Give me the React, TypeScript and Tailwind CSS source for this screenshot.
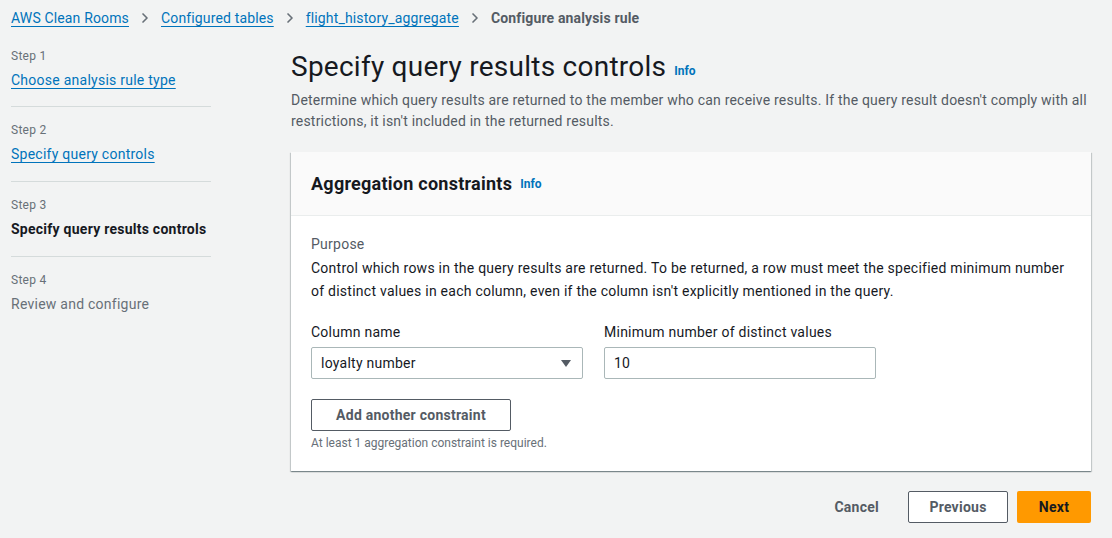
import { ChevronRight } from "lucide-react";

const steps = [
  { label: "Step 1", title: "Choose analysis rule type", state: "link" },
  { label: "Step 2", title: "Specify query controls", state: "link" },
  { label: "Step 3", title: "Specify query results controls", state: "current" },
  { label: "Step 4", title: "Review and configure", state: "disabled" },
];

function Info() {
  return (
    <a className="text-[12px] font-bold text-[#0073bb] leading-none cursor-pointer tracking-normal">
      Info
    </a>
  );
}

export default function App() {
  return (
    <div
      className="min-h-[538px] bg-[#f2f3f3] text-[#16191f] tracking-[0.25px]"
      style={{ fontFamily: '"Roboto", "Liberation Sans", sans-serif' }}
    >
      {/* Breadcrumbs */}
      <nav className="flex items-center gap-[8px] pl-[11px] pt-[2px] h-[34px] text-[14px] tracking-[0.15px]">
        <a className="text-[#0073bb] underline underline-offset-[3px] decoration-1">
          AWS Clean Rooms
        </a>
        <ChevronRight className="w-[16px] h-[16px] text-[#687078]" strokeWidth={2.5} />
        <a className="text-[#0073bb] underline underline-offset-[3px] decoration-1">
          Configured tables
        </a>
        <ChevronRight className="w-[16px] h-[16px] text-[#687078]" strokeWidth={2.5} />
        <a className="text-[#0073bb] underline underline-offset-[3px] decoration-1">
          flight_history_aggregate
        </a>
        <ChevronRight className="w-[16px] h-[16px] text-[#687078]" strokeWidth={2.5} />
        <span className="font-bold text-[#545b64]">Configure analysis rule</span>
      </nav>

      <div className="flex pl-[11px] pt-[10px]">
        {/* Wizard steps */}
        <ol className="w-[200px] shrink-0 mt-[1px]">
          {steps.map((s, i) => (
            <li
              key={s.label}
              className={`${i < steps.length - 1 ? "border-b border-[#d5dbdb]" : ""} ${i > 0 ? "h-[75px] pt-[15px]" : "h-[62px] pt-[3px]"}`}
            >
              <div className="text-[12px] text-[#687078] leading-[16px]">{s.label}</div>
              <div className="mt-[6px] text-[14px] leading-[20px]">
                {s.state === "link" && (
                  <a className="text-[#0073bb] underline underline-offset-[3px] decoration-1">
                    {s.title}
                  </a>
                )}
                {s.state === "current" && <span className="font-bold">{s.title}</span>}
                {s.state === "disabled" && (
                  <span className="text-[#687078]">{s.title}</span>
                )}
              </div>
            </li>
          ))}
        </ol>

        {/* Main content */}
        <main className="ml-[80px] w-[800px]">
          <div className="flex items-end gap-[8px] mt-[5px]">
            <h1 className="text-[28px] leading-[36px] font-normal">
              Specify query results controls
            </h1>
            <div className="pb-[3px]">
              <Info />
            </div>
          </div>
          <p className="mt-[5px] w-[805px] text-[14px] leading-[21px] text-[#545b64] tracking-[0.2px]">
            Determine which query results are returned to the member who can receive results. If the
            query result doesn't comply with all restrictions, it isn't included in the returned
            results.
          </p>

          <section className="mt-[20px] bg-white shadow-[0_1px_1px_0_rgba(0,28,36,0.3),1px_1px_1px_0_rgba(0,28,36,0.15),-1px_1px_1px_0_rgba(0,28,36,0.15)]">
            <header className="h-[64px] bg-[#fafafa] border-b border-[#eaeded] px-[20px] flex items-center gap-[8px]">
              <h2 className="text-[18px] font-bold leading-[22px]">Aggregation constraints</h2>
              <Info />
            </header>
            <div className="px-[20px] pt-[18px] pb-[20px]">
              <div className="text-[14px] text-[#545b64] leading-[20px]">Purpose</div>
              <p className="mt-[3px] text-[14px] leading-[23px]">
                Control which rows in the query results are returned. To be returned, a row must meet
                the specified minimum number of distinct values in each column, even if the column
                isn't explicitly mentioned in the query.
              </p>

              <div className="mt-[19px] flex gap-[21px]">
                <div className="w-[272px]">
                  <label className="block text-[14px] leading-[20px]">Column name</label>
                  <div className="mt-[5px] h-[32px] border border-[#aab7b8] rounded-[2px] flex items-center justify-between pl-[9px] pr-[10px] text-[14px]">
                    <span>loyalty number</span>
                    <svg width="12" height="9" viewBox="0 0 12 9">
                      <path d="M1 1h10L6 8z" fill="#545b64" />
                    </svg>
                  </div>
                </div>
                <div className="w-[272px]">
                  <label className="block text-[14px] leading-[20px]">
                    Minimum number of distinct values
                  </label>
                  <div className="mt-[5px] h-[32px] border border-[#aab7b8] rounded-[2px] flex items-center pl-[9px] text-[14px]">
                    10
                  </div>
                </div>
              </div>

              <button className="mt-[20px] h-[32px] w-[200px] border border-[#545b64] rounded-[2px] bg-white text-[14px] font-bold text-[#545b64]">
                Add another constraint
              </button>
              <div className="mt-[4px] text-[12px] leading-[16px] text-[#687078] tracking-normal">
                At least 1 aggregation constraint is required.
              </div>
            </div>
          </section>

          <div className="mt-[20px] flex justify-end items-center gap-[9px]">
            <button className="h-[32px] px-[20px] text-[14px] font-bold text-[#545b64]">
              Cancel
            </button>
            <button className="h-[32px] w-[100px] border border-[#545b64] rounded-[2px] bg-white text-[14px] font-bold text-[#545b64]">
              Previous
            </button>
            <button className="h-[32px] w-[74px] rounded-[2px] bg-[#ff9900] text-[14px] font-bold text-[#16191f]">
              Next
            </button>
          </div>
        </main>
      </div>
    </div>
  );
}
